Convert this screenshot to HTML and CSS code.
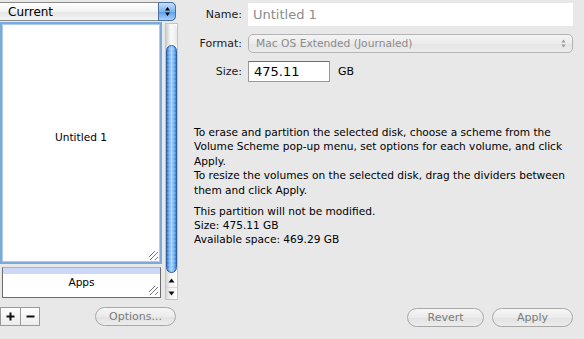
FILE: index.html
```html
<!DOCTYPE html>
<html>
<head>
<meta charset="utf-8">
<link rel="stylesheet" href="styles.css">
</head>
<body>
<div class="window">
  <div class="left">
    <div class="popup current">
      <span class="popup-label">Current</span>
      <span class="stepper blue">
        <svg width="7" height="11" viewBox="0 0 7 11"><path d="M3.5 1 L6 4.5 H1 Z M3.5 10 L6 6.5 H1 Z" fill="#000"/></svg>
      </span>
    </div>
    <div class="list-row">
      <div class="list">
        <div class="vol selected">
          <span>Untitled 1</span>
          <span class="grip"></span>
        </div>
        <div class="vol apps">
          <div class="vol-head"></div>
          <div class="vol-body"><span>Apps</span></div>
          <span class="grip"></span>
        </div>
      </div>
      <div class="scroller">
        <div class="cap"></div>
        <div class="thumb"></div>
        <div class="arrows">
          <span class="arrow">
            <svg width="7" height="5" viewBox="0 0 7 5"><path d="M3.5 0.5 L6.5 4.5 H0.5 Z" fill="#111"/></svg>
          </span>
          <span class="arrow">
            <svg width="7" height="5" viewBox="0 0 7 5"><path d="M3.5 4.5 L6.5 0.5 H0.5 Z" fill="#111"/></svg>
          </span>
        </div>
      </div>
    </div>
    <div class="left-bottom">
      <div class="pm">
        <span class="pm-btn">
          <svg width="9" height="9" viewBox="0 0 9 9"><path d="M4.5 0.5 V8.5 M0.5 4.5 H8.5" stroke="#111" stroke-width="2"/></svg>
        </span>
        <span class="pm-btn">
          <svg width="9" height="9" viewBox="0 0 9 9"><path d="M0.5 4.5 H8.5" stroke="#111" stroke-width="2"/></svg>
        </span>
      </div>
      <span class="pill options">Options...</span>
    </div>
  </div>
  <div class="right">
    <div class="form">
      <label class="lbl">Name:</label>
      <div class="field name">Untitled 1</div>
      <label class="lbl">Format:</label>
      <div class="popup format">
        <span class="popup-label">Mac OS Extended (Journaled)</span>
        <svg class="format-arrows" width="7" height="11" viewBox="0 0 7 11"><path d="M3.5 1.5 L5.5 4.5 H1.5 Z M3.5 9.5 L5.5 6.5 H1.5 Z" fill="#9a9a9a"/></svg>
      </div>
      <label class="lbl">Size:</label>
      <div class="size-row">
        <div class="field size">475.11</div>
        <span class="unit">GB</span>
      </div>
    </div>
    <div class="desc">
      <p>To erase and partition the selected disk, choose a scheme from the Volume Scheme pop-up menu, set options for each volume, and click Apply.<br>To resize the volumes on the selected disk, drag the dividers between them and click Apply.</p>
      <p class="info">This partition will not be modified.<br>Size: 475.11 GB<br>Available space: 469.29 GB</p>
    </div>
    <div class="actions">
      <span class="pill revert">Revert</span>
      <span class="pill apply">Apply</span>
    </div>
  </div>
</div>
</body>
</html>
```

FILE: styles.css
```css
* { box-sizing: border-box; }
html, body {
  margin: 0;
  padding: 0;
  background: #e8e8e8;
}
body {
  font-family: "DejaVu Sans", "Liberation Sans", sans-serif;
  font-size: 10.6px;
  color: #000;
}
.window {
  display: flex;
  width: 584px;
  height: 339px;
}
.left {
  width: 190px;
  display: flex;
  flex-direction: column;
  padding-top: 2px;
}
.popup {
  display: flex;
  align-items: center;
  height: 19px;
  border: 1px solid #8a8a8a;
  border-radius: 0 5px 5px 0;
  background: linear-gradient(#ffffff, #f3f3f3 50%, #e4e4e4 51%, #f4f4f4);
  position: relative;
}
.current {
  width: 176px;
  border-left: none;
  padding-left: 8px;
  font-size: 12px;
}
.popup-label { flex: 1; }
.stepper {
  width: 18px;
  height: 19px;
  margin: -1px -1px -1px 0;
  border-radius: 0 5px 5px 0;
  display: flex;
  align-items: center;
  justify-content: center;
}
.stepper.blue {
  background: linear-gradient(#c5defa, #7db4ef 50%, #5a9de8 51%, #a6d2fb);
  border: 1px solid #4a6fa0;
}
.list-row {
  display: flex;
  margin-top: 1px;
  height: 278px;
}
.list {
  width: 162px;
  display: flex;
  flex-direction: column;
}
.vol {
  position: relative;
  display: flex;
  align-items: center;
  justify-content: center;
}
.vol.selected {
  height: 242px;
  border: 2px solid #7aa9dc;
  box-shadow: inset 0 0 0 1px #aecbe9;
  background: #fff;
  padding-bottom: 12px;
}
.vol.apps {
  margin-top: 3px;
  margin-left: 2px;
  margin-right: 1px;
  height: 31px;
  flex-direction: column;
  align-items: stretch;
  border: 1px solid #6c6c6c;
  border-top: 1px solid #b0b0b0;
}
.vol-head {
  height: 6px;
  background: #cdd7f7;
}
.vol-body {
  flex: 1;
  display: flex;
  align-items: center;
  justify-content: center;
  background: #fff;
  padding-bottom: 8px;
}
.grip {
  position: absolute;
  right: 2px;
  bottom: 2px;
  width: 9px;
  height: 9px;
  background: linear-gradient(135deg, transparent 0 30%, #777 30% 36%, transparent 36% 55%, #777 55% 61%, transparent 61% 80%, #777 80% 86%, transparent 86%);
}
.scroller {
  width: 13px;
  margin-left: 3px;
  margin-top: 1px;
  display: flex;
  flex-direction: column;
  background: linear-gradient(to right, #d8d8d8, #f4f4f4 40%, #ffffff);
  border: 1px solid #c4c4c4;
}
.cap {
  height: 21px;
  background: linear-gradient(to right, #cfcfcf, #fafafa 45%, #e9e9e9);
  border-radius: 6px 6px 0 0;
}
.thumb {
  flex: 1;
  border-radius: 6px;
  background:
    repeating-linear-gradient(transparent 0 2px, rgba(255,255,255,0.12) 2px 4px),
    linear-gradient(to right, #2f6fcc, #77b4f2 25%, #a6d4fb 50%, #77b7f5 75%, #3877d0);
  border: 1px solid #2c5fa6;
}
.arrows {
  height: 24px;
  display: flex;
  flex-direction: column;
  margin-top: 2px;
}
.arrow {
  flex: 1;
  display: flex;
  align-items: center;
  justify-content: center;
}
.arrow + .arrow { border-top: 1px solid #d8d8d8; }
.left-bottom {
  display: flex;
  align-items: center;
  margin-top: 7px;
}
.pm {
  display: flex;
  border: 1px solid #9a9a9a;
  background: linear-gradient(#ffffff, #ececec);
}
.pm-btn {
  width: 19px;
  height: 17px;
  display: flex;
  align-items: center;
  justify-content: center;
}
.pm-btn + .pm-btn { border-left: 1px solid #9a9a9a; }
.pill {
  display: flex;
  align-items: center;
  justify-content: center;
  height: 19px;
  border: 1px solid #a8a8a8;
  border-radius: 10px;
  background: linear-gradient(#f6f6f6, #ebebeb 50%, #e2e2e2 51%, #ececec);
  color: #7b7b7b;
  font-size: 11px;
}
.options {
  width: 81px;
  margin-left: 55px;
}
.right {
  flex: 1;
  display: flex;
  flex-direction: column;
  padding-right: 11px;
}
.form {
  display: grid;
  grid-template-columns: 52px 1fr;
  column-gap: 6px;
  row-gap: 8px;
  padding-top: 3px;
  align-items: center;
  font-size: 11px;
}
.lbl {
  text-align: right;
  color: #1a1a1a;
}
.field {
  background: #fff;
  height: 23px;
  display: flex;
  align-items: center;
  padding-left: 5px;
  font-size: 13px;
}
.field.name { color: #8c8c8c; }
.popup.format {
  border-radius: 5px;
  border: 1px solid #b4b4b4;
  background: linear-gradient(#f4f4f4, #ececec 50%, #e4e4e4 51%, #ececec);
  color: #8a8a8a;
  height: 19px;
  padding-left: 7px;
  font-size: 10.7px;
}
.format-arrows { margin-right: 5px; }
.size-row {
  display: flex;
  align-items: center;
}
.field.size {
  width: 82px;
  height: 21px;
  border: 1px solid #9a9a9a;
  border-top-color: #6e6e6e;
}
.unit {
  margin-left: 8px;
}
.desc {
  padding-left: 4px;
  margin-top: 43px;
  line-height: 14.4px;
}
.desc p { margin: 0; }
.desc .info { margin-top: 7px; line-height: 14px; }
.actions {
  margin-top: auto;
  margin-bottom: 12px;
  display: flex;
  justify-content: flex-end;
  gap: 8px;
}
.revert { width: 77px; }
.apply { width: 81px; }
```
